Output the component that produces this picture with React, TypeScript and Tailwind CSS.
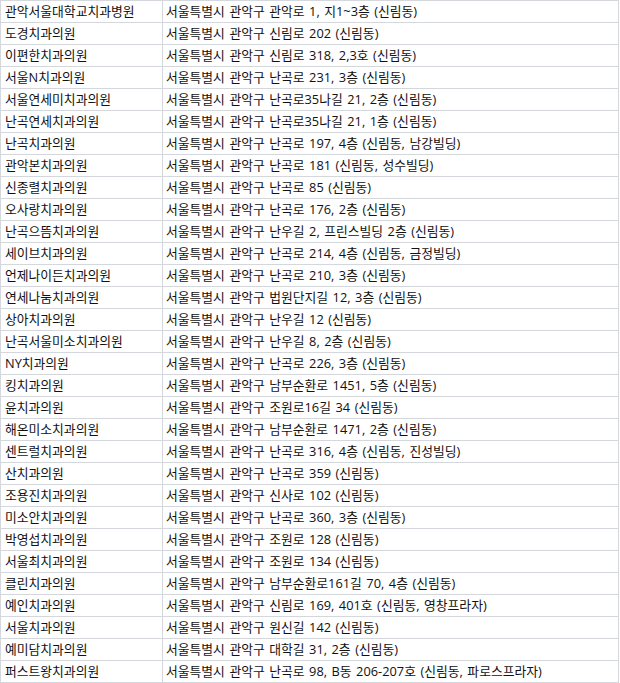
const rows: [string, string][] = [
  ['관악서울대학교치과병원', '서울특별시 관악구 관악로 1, 지1~3층 (신림동)'],
  ['도경치과의원', '서울특별시 관악구 신림로 202 (신림동)'],
  ['이편한치과의원', '서울특별시 관악구 신림로 318, 2,3호 (신림동)'],
  ['서울N치과의원', '서울특별시 관악구 난곡로 231, 3층 (신림동)'],
  ['서울연세미치과의원', '서울특별시 관악구 난곡로35나길 21, 2층 (신림동)'],
  ['난곡연세치과의원', '서울특별시 관악구 난곡로35나길 21, 1층 (신림동)'],
  ['난곡치과의원', '서울특별시 관악구 난곡로 197, 4층 (신림동, 남강빌딩)'],
  ['관악본치과의원', '서울특별시 관악구 난곡로 181 (신림동, 성수빌딩)'],
  ['신종렬치과의원', '서울특별시 관악구 난곡로 85 (신림동)'],
  ['오사랑치과의원', '서울특별시 관악구 난곡로 176, 2층 (신림동)'],
  ['난곡으뜸치과의원', '서울특별시 관악구 난우길 2, 프린스빌딩 2층 (신림동)'],
  ['세이브치과의원', '서울특별시 관악구 난곡로 214, 4층 (신림동, 금정빌딩)'],
  ['언제나이든치과의원', '서울특별시 관악구 난곡로 210, 3층 (신림동)'],
  ['연세나눔치과의원', '서울특별시 관악구 법원단지길 12, 3층 (신림동)'],
  ['상아치과의원', '서울특별시 관악구 난우길 12 (신림동)'],
  ['난곡서울미소치과의원', '서울특별시 관악구 난우길 8, 2층 (신림동)'],
  ['NY치과의원', '서울특별시 관악구 난곡로 226, 3층 (신림동)'],
  ['킹치과의원', '서울특별시 관악구 남부순환로 1451, 5층 (신림동)'],
  ['윤치과의원', '서울특별시 관악구 조원로16길 34 (신림동)'],
  ['해온미소치과의원', '서울특별시 관악구 남부순환로 1471, 2층 (신림동)'],
  ['센트럴치과의원', '서울특별시 관악구 난곡로 316, 4층 (신림동, 진성빌딩)'],
  ['산치과의원', '서울특별시 관악구 난곡로 359 (신림동)'],
  ['조용진치과의원', '서울특별시 관악구 신사로 102 (신림동)'],
  ['미소안치과의원', '서울특별시 관악구 난곡로 360, 3층 (신림동)'],
  ['박영섭치과의원', '서울특별시 관악구 조원로 128 (신림동)'],
  ['서울최치과의원', '서울특별시 관악구 조원로 134 (신림동)'],
  ['클린치과의원', '서울특별시 관악구 남부순환로161길 70, 4층 (신림동)'],
  ['예인치과의원', '서울특별시 관악구 신림로 169, 401호 (신림동, 영창프라자)'],
  ['서울치과의원', '서울특별시 관악구 원신길 142 (신림동)'],
  ['예미담치과의원', '서울특별시 관악구 대학길 31, 2층 (신림동)'],
  ['퍼스트왕치과의원', '서울특별시 관악구 난곡로 98, B동 206-207호 (신림동, 파로스프라자)'],
]

export default function App() {
  return (
    <div className="bg-white w-[620px] h-[683px] font-['Open_Sans','Noto_Sans_CJK_KR',sans-serif] text-[12.8px] text-[#111] [word-spacing:1.2px]">
      <div className="grid grid-cols-[162px_456px] border-l border-t border-[#d4d8dd] w-[619px]">
        {rows.map(([name, addr]) => (
          <div key={name} className="contents">
            <div className="h-[22px] border-r border-b border-[#d4d8dd] pl-1 flex items-center whitespace-nowrap overflow-hidden">
              {name}
            </div>
            <div className="h-[22px] border-r border-b border-[#d4d8dd] pl-[3px] flex items-center whitespace-nowrap overflow-hidden">
              {addr}
            </div>
          </div>
        ))}
      </div>
    </div>
  )
}
